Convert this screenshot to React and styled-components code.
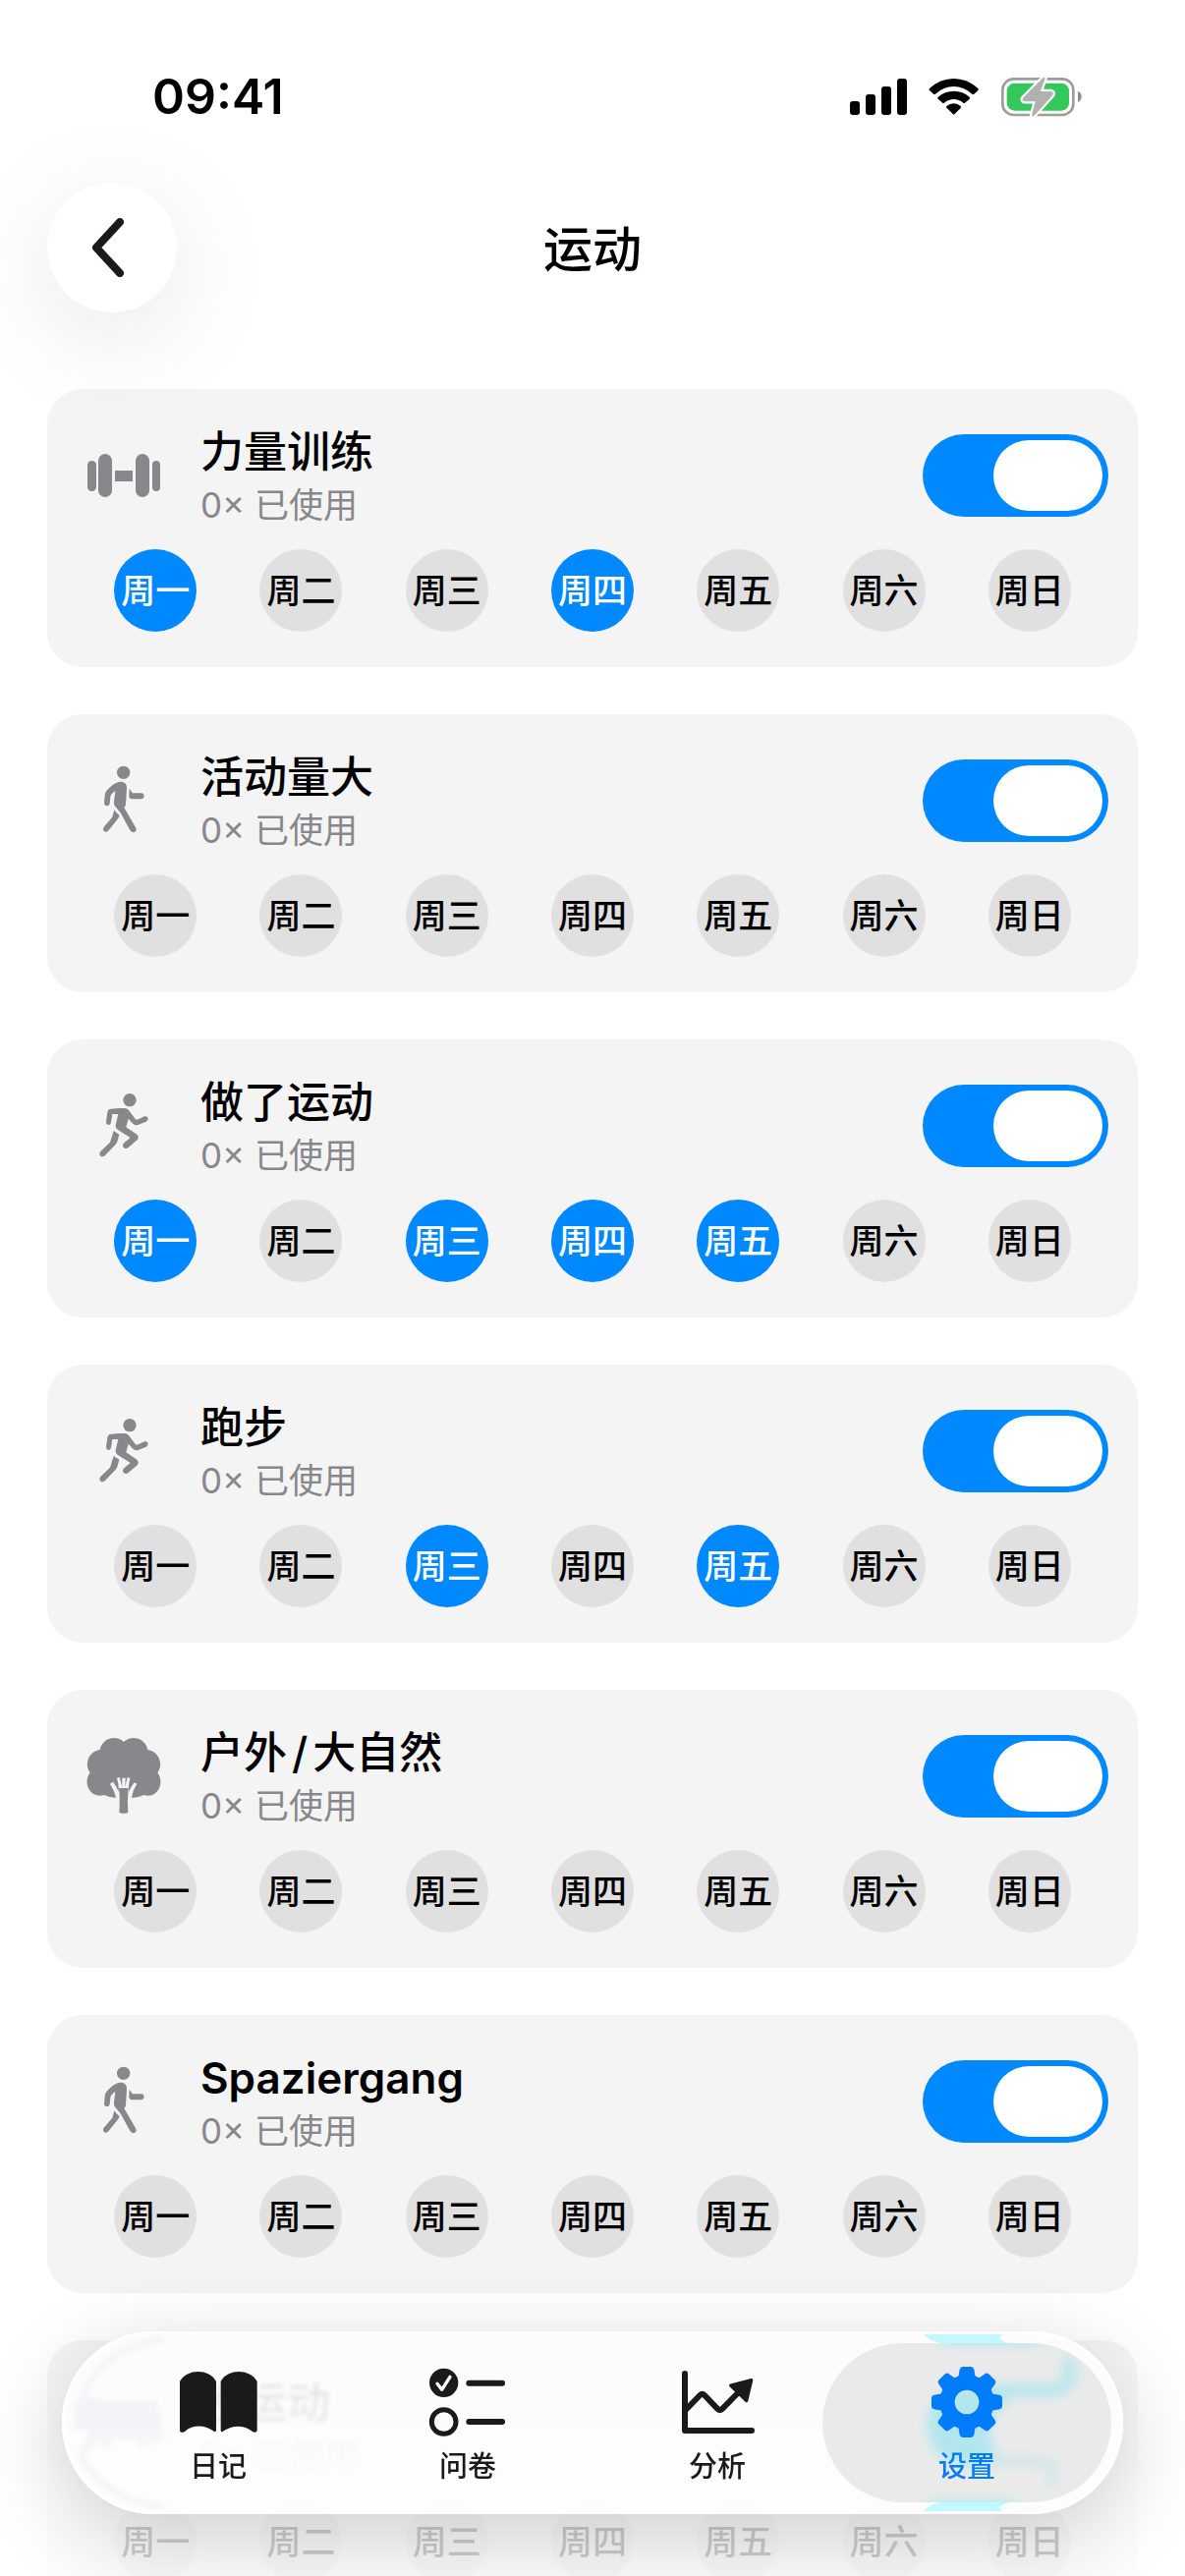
import styled, { createGlobalStyle, css } from 'styled-components';
import { useState } from 'react';

const GlobalStyle = createGlobalStyle`
  * {
    box-sizing: border-box;
  }

  body {
    margin: 0;
    background-color: #ffffff;
    color: #000000;
    font-family: Inter, 'Noto Sans CJK SC', sans-serif;
  }

  button,
  input {
    margin: 0;
    padding: 0;
    border: none;
    font-family: inherit;
    cursor: pointer;
  }
`;

const StyledScreen = styled.div`
  height: 100vh;
  overflow-y: auto;
  scrollbar-width: none;
`;

const StyledStatusBar = styled.div`
  display: flex;
  align-items: center;
  justify-content: space-between;
  height: 126px;
  padding: 70px 104px 0 155px;
`;

const StyledTime = styled.time`
  font-size: 50px;
  line-height: 56px;
  font-weight: 600;
`;

const StyledStatusIcons = styled.div`
  display: flex;
  align-items: center;
  gap: 22px;
`;

const StyledHeader = styled.header`
  position: relative;
  z-index: 1;
  display: grid;
  grid-template-columns: 132px 1fr 132px;
  align-items: center;
  padding: 60px 48px 78px;
`;

const StyledBackButton = styled.button`
  display: flex;
  align-items: center;
  justify-content: center;
  height: 132px;
  border-radius: 50%;
  background-color: #ffffff;
  box-shadow: 0 24px 110px rgba(0, 0, 0, 0.1);
`;

const StyledTitle = styled.h1`
  margin: 0;
  padding-top: 4px;
  text-align: center;
  font-size: 50px;
  line-height: 60px;
  font-weight: 500;
`;

const StyledList = styled.main`
  display: flex;
  flex-direction: column;
  gap: 48px;
  padding: 0 48px 300px;
`;

const StyledCard = styled.section`
  display: flex;
  flex-direction: column;
  gap: 23px;
  padding: 36px;
  border-radius: 36px;
  background-color: #f4f4f4;
`;

const StyledCardHeader = styled.div`
  display: flex;
  align-items: center;
  gap: 36px;
  height: 104px;
  margin-right: -6px;
`;

const StyledCardText = styled.div`
  flex: 1;
  padding-top: 6px;
`;

const StyledCardTitle = styled.h2`
  margin: 0;
  font-size: 44px;
  line-height: 54px;
  font-weight: 500;

  &:lang(de) {
    font-weight: 600;
  }
`;

const StyledSlash = styled.span`
  margin: 0 5px;
`;

const StyledCardUsage = styled.p`
  margin: 0;
  color: #88888c;
  font-size: 35px;
  line-height: 54px;
  font-weight: 400;
`;

const StyledSwitch = styled.input`
  appearance: none;
  width: 189px;
  height: 84px;
  padding: 6px;
  border-radius: 42px;
  background-color: #d8d8d8;
  transition: background-color 0.3s;

  &::before {
    content: '';
    display: block;
    width: 111px;
    height: 72px;
    border-radius: 36px;
    background-color: #ffffff;
    transition: margin 0.3s;
  }

  &:checked {
    background-color: #0088ff;
  }

  &:checked::before {
    margin-left: 66px;
  }
`;

const StyledDays = styled.div`
  display: flex;
`;

const StyledDayCell = styled.div`
  flex: 1;
  display: flex;
  justify-content: center;
`;

const StyledDay = styled.button`
  width: 84px;
  height: 84px;
  border-radius: 50%;
  background-color: #e0e0e0;
  color: #000000;
  font-size: 35px;
  line-height: 84px;
  font-weight: 500;
  white-space: nowrap;

  ${({ $active }) =>
    $active &&
    css`
      background-color: #0088ff;
      color: #ffffff;
    `}
`;

const StyledBottomFade = styled.div`
  position: fixed;
  left: 0;
  right: 0;
  bottom: 0;
  height: 250px;
  background: linear-gradient(rgba(255, 255, 255, 0), rgba(255, 255, 255, 0.8) 60%);
  pointer-events: none;
`;

const StyledTabBar = styled.nav`
  position: fixed;
  left: 63px;
  right: 63px;
  bottom: 63px;
  display: flex;
  padding: 12px;
  border-radius: 93px;
  background-color: rgba(253, 253, 253, 0.86);
  backdrop-filter: blur(2px);
  box-shadow:
    0 24px 90px rgba(0, 0, 0, 0.19),
    inset 0 0 0 3px #ffffff;
`;

const StyledTab = styled.a`
  position: relative;
  flex: 1;
  display: flex;
  flex-direction: column;
  align-items: center;
  gap: 12px;
  padding: 24px 0 18px;
  border-radius: 81px;
  color: ${({ $active }) => ($active ? '#007cfa' : '#1a1a1a')};
  background-color: ${({ $active }) => ($active ? '#eaeaea' : 'transparent')};
  font-size: 29px;
  line-height: 36px;
  font-weight: 500;
  text-decoration: none;

  & + & {
    margin-left: -40px;
  }

  svg,
  span {
    position: relative;
  }
`;

const StyledGlow = styled.svg`
  && {
    position: absolute;
    top: -12px;
    right: -12px;
  }
`;

const StyledEdge = styled.svg`
  position: absolute;
  top: 0;
  left: 0;
`;

const iconProps = { width: 84, height: 84, fill: '#88888c', 'aria-hidden': true };

function DumbbellIcon() {
  return (
    <svg viewBox="0 0 84 84" {...iconProps}>
      <rect x="5" y="27" width="9" height="31" rx="4.5" />
      <rect x="16" y="20" width="14" height="44" rx="7" />
      <rect x="33" y="37" width="18" height="11" />
      <rect x="54" y="20" width="14" height="44" rx="7" />
      <rect x="71" y="27" width="8" height="31" rx="4" />
    </svg>
  );
}

function WalkIcon() {
  return (
    <svg viewBox="72 99 252 252" {...iconProps}>
      <circle cx="197" cy="139" r="20" />
      <path d="M182 168 C198 165 208 173 207 188 L204 236 Q203 242 199 246 L235 308 Q239 317 230 321 Q222 323 217 315 L188 262 L172 243 Q167 237 168 228 L172 195 Q158 205 157 213 L155 234 Q153 241 146 241 Q138 240 138 232 L140 209 Q141 200 147 193 Q167 171 182 168 Z" />
      <path d="M215 189 L225 202 H253 Q260 203 260 211 Q260 219 253 220 H222 Q214 219 214 211 Z" />
      <path d="M169 253 Q175 263 185 270 Q181 281 176 285 L150 317 Q143 323 137 318 Q132 312 137 305 L163 275 Z" />
    </svg>
  );
}

function RunIcon() {
  return (
    <svg viewBox="72 102 252 252" {...iconProps}>
      <circle cx="216" cy="149" r="20" />
      <path d="M159 176 Q181 173 199 174 Q211 175 217 185 L233 207 Q237 210 242 208 L261 199 Q269 197 272 204 Q273 211 266 215 L241 225 Q233 227 226 221 L212 206 L205 232 L236 253 Q247 262 239 271 L211 295 Q203 300 197 294 Q192 287 199 280 L218 264 L181 241 Q172 235 173 225 L181 192 L163 192 L159 218 Q157 226 150 225 Q144 223 144 216 L148 187 Q149 177 159 176 Z" />
      <path d="M167 243 L184 254 L178 276 Q176 282 172 286 L141 318 Q134 325 127 320 Q121 313 127 306 L156 278 Z" />
    </svg>
  );
}

function TreeIcon() {
  return (
    <svg viewBox="72 78 252 252" {...iconProps}>
      <path d="M198 99 C221 76 264 87 271 123 C304 128 321 166 301 193 C325 226 299 274 259 261 Q245 268 222 270 Q225 247 238 227 L230 223 Q219 238 213 251 Q211 233 217 210 L209 207 L202 237 L203 209 H193 L193 237 L185 207 L177 210 Q184 231 182 251 Q175 233 165 221 L156 227 Q169 246 174 270 Q153 268 138 261 C96 273 71 226 95 193 C75 166 92 128 125 123 C132 87 175 76 198 99 Z" />
      <path d="M183 240 H212 Q208 280 211 314 Q198 321 184 314 Q187 270 183 240 Z" />
    </svg>
  );
}

function BookIcon() {
  return (
    <svg viewBox="30 27 252 216" width="84" height="72" fill="currentColor" aria-hidden="true">
      <path d="M39 72 C60 32 130 32 150 72 V221 Q148 229 141 223 C115 204 78 204 55 224 Q41 232 39 222 Z" />
      <path d="M164 72 C184 32 254 32 275 72 V222 Q273 231 261 225 C236 204 199 204 173 223 Q166 229 164 221 Z" />
    </svg>
  );
}

function ChecklistIcon() {
  return (
    <svg
      viewBox="792 27 252 216"
      width="84"
      height="72"
      fill="none"
      stroke="currentColor"
      strokeLinecap="round"
      strokeLinejoin="round"
      aria-hidden="true"
    >
      <circle cx="845" cy="76" r="44" fill="currentColor" stroke="none" />
      <path d="M825 79 L839 97 L864 58" stroke="#ffffff" strokeWidth="10" />
      <circle cx="845" cy="195" r="37" strokeWidth="15" />
      <path d="M922 77 H1023 M922 195 H1023" strokeWidth="18" />
    </svg>
  );
}

function ChartIcon() {
  return (
    <svg
      viewBox="24 27 252 216"
      width="84"
      height="72"
      fill="none"
      stroke="currentColor"
      strokeWidth="18"
      strokeLinecap="round"
      strokeLinejoin="round"
      aria-hidden="true"
    >
      <path d="M51 48 V222 H255" />
      <path d="M55 157 L97 114 Q104 107 111 114 L150 155 Q158 163 166 155 L218 102" strokeLinecap="butt" />
      <path d="M191 84 L254 68 L239 131 Z" fill="currentColor" strokeWidth="10" />
    </svg>
  );
}

function GearIcon() {
  return (
    <svg viewBox="786 27 252 216" width="84" height="72" fill="#007cfa" aria-hidden="true">
      <circle cx="912" cy="135" r="60" fill="none" stroke="#007cfa" strokeWidth="46" />
      {[0, 45, 90, 135, 180, 225, 270, 315].map((angle) => (
        <path
          key={angle}
          transform={`rotate(${angle} 912 135)`}
          d="M878 65 Q886 62 887 53 L890 35 Q892 27 899 27 H925 Q932 27 934 35 L937 53 Q938 62 946 65 L930 88 H894 Z"
        />
      ))}
    </svg>
  );
}

function StatusIcons() {
  return (
    <StyledStatusIcons>
      <svg viewBox="15 24 174 114" width="58" height="38" role="img" aria-label="信号">
        <rect x="15" y="96" width="30" height="42" rx="9" />
        <rect x="63" y="75" width="30" height="63" rx="9" />
        <rect x="111" y="51" width="30" height="87" rx="9" />
        <rect x="159" y="27" width="30" height="111" rx="9" />
      </svg>
      <svg viewBox="255 24 153 114" width="51" height="38" role="img" aria-label="Wi-Fi">
        <path d="M257 58 Q290 27 332 27 Q374 27 407 58 Q408 61 406 63 L394 74 Q391 76 388 74 Q363 51 332 51 Q301 51 276 74 Q273 76 270 74 L258 63 Q256 61 257 58 Z" />
        <path d="M283 84 Q305 65 332 65 Q359 65 381 84 Q382 87 380 89 L366 101 Q363 103 361 101 Q348 90 332 90 Q316 90 303 101 Q300 103 298 101 L284 89 Q282 87 283 84 Z" />
        <path d="M309 112 Q320 103 332 103 Q344 103 354 112 Q355 115 353 117 L334 136 Q332 138 330 136 L311 117 Q308 115 309 112 Z" />
      </svg>
      <svg viewBox="471 18 252 126" width="84" height="42" role="img" aria-label="电池充电中">
        <rect x="478" y="28" width="216" height="110" rx="34" fill="none" stroke="#9d9d9d" strokeWidth="8" />
        <path d="M708 65 Q719 70 719 82 Q719 94 708 99 Z" fill="#8c8c8c" />
        <rect x="491" y="41" width="190" height="84" rx="24" fill="#34c85a" />
        <path
          d="M602 24 L540 86 Q536 95 545 97 H578 L567 139 Q569 144 576 139 L630 79 Q637 69 627 66 H594 L608 26 Q606 20 602 24 Z"
          fill="#b1b1b1"
          stroke="#ffffff"
          strokeWidth="13"
          strokeLinejoin="round"
          paintOrder="stroke"
        />
      </svg>
    </StyledStatusIcons>
  );
}

// soft light of the switch that shines through the glass
function TabGlow() {
  return (
    <StyledGlow width="320" height="186" viewBox="0 0 320 186" aria-hidden="true">
      <defs>
        <filter id="soften" x="-20%" y="-20%" width="140%" height="140%">
          <feGaussianBlur stdDeviation="6" />
        </filter>
        <clipPath id="pill">
          <rect x="14" y="12" width="294" height="162" rx="81" />
        </clipPath>
      </defs>
      <path d="M117 3 H200 Q186 6 206 13 H138 Q122 10 117 3 Z" fill="#c4f8ff" />
      <path d="M117 183 H200 Q186 180 206 173 H138 Q122 176 117 183 Z" fill="#c4f8ff" />
      <g clipPath="url(#pill)">
        <g filter="url(#soften)" fill="none" stroke="#b2e6ed" strokeLinecap="round">
          <path d="M205 56 Q122 48 120 94 Q122 140 180 138 L192 126 Q172 95 205 68 Z" fill="#b2e6ed" stroke="none" />
          <path d="M190 60 H250 Q272 54 264 32" strokeWidth="12" />
          <path d="M180 132 H240 Q256 142 246 156" strokeWidth="9" stroke="#cfe6e9" />
          <path d="M140 8 H235 M126 178 H205" strokeWidth="10" />
        </g>
      </g>
    </StyledGlow>
  );
}

function BarEdge() {
  return (
    <StyledEdge width="120" height="186" viewBox="0 0 120 186" aria-hidden="true">
      <defs>
        <filter id="edge">
          <feGaussianBlur stdDeviation="2" />
        </filter>
      </defs>
      <g filter="url(#edge)" fill="none" stroke="#f5f6f8">
        <path d="M13 70 Q25 62 40 70 H98 V100 H13 Z" fill="#f3f4f7" stroke="none" />
        <path d="M20 134 Q22 108 46 106 H104" strokeWidth="9" />
        <path d="M20 72 Q36 18 104 8" strokeWidth="8" />
        <path d="M22 130 Q48 174 104 179" strokeWidth="7" />
      </g>
    </StyledEdge>
  );
}

const weekdays = ['周一', '周二', '周三', '周四', '周五', '周六', '周日'];

const activities = [
  { name: '力量训练', Icon: DumbbellIcon, days: [0, 3] },
  { name: '活动量大', Icon: WalkIcon, days: [] },
  { name: '做了运动', Icon: RunIcon, days: [0, 2, 3, 4] },
  { name: '跑步', Icon: RunIcon, days: [2, 4] },
  { name: '户外/大自然', Icon: TreeIcon, days: [] },
  { name: 'Spaziergang', lang: 'de', Icon: WalkIcon, days: [] },
  { name: '没运动', Icon: DumbbellIcon, days: [] },
];

const tabs = [
  { label: '日记', Icon: BookIcon },
  { label: '问卷', Icon: ChecklistIcon },
  { label: '分析', Icon: ChartIcon },
  { label: '设置', Icon: GearIcon },
];

/* eslint react/prop-types: 0 */
function ActivityCard({ name, lang, Icon, days }) {
  const [enabled, setEnabled] = useState(true);
  const [selected, setSelected] = useState(days);
  const [first, second] = name.split('/');

  const toggleDay = (day) => {
    setSelected((curr) =>
      curr.includes(day) ? curr.filter((d) => d !== day) : [...curr, day]
    );
  };

  return (
    <StyledCard>
      <StyledCardHeader>
        <Icon />
        <StyledCardText>
          <StyledCardTitle lang={lang}>
            {first}
            {second && <StyledSlash>/</StyledSlash>}
            {second}
          </StyledCardTitle>
          <StyledCardUsage>0× 已使用</StyledCardUsage>
        </StyledCardText>
        <StyledSwitch
          type="checkbox"
          role="switch"
          aria-label={name}
          checked={enabled}
          onChange={(e) => setEnabled(e.target.checked)}
        />
      </StyledCardHeader>
      <StyledDays>
        {weekdays.map((label, day) => (
          <StyledDayCell key={label}>
            <StyledDay
              type="button"
              $active={selected.includes(day)}
              aria-pressed={selected.includes(day)}
              onClick={() => toggleDay(day)}
            >
              {label}
            </StyledDay>
          </StyledDayCell>
        ))}
      </StyledDays>
    </StyledCard>
  );
}

function App() {
  const [currTab, setCurrTab] = useState('设置');

  return (
    <StyledScreen lang="zh-CN">
      <GlobalStyle />
      <StyledStatusBar>
        <StyledTime>09:41</StyledTime>
        <StatusIcons />
      </StyledStatusBar>
      <StyledHeader>
        <StyledBackButton type="button" aria-label="返回">
          <svg width="42" height="60" viewBox="0 0 42 60" fill="none" aria-hidden="true">
            <path
              d="M29 4 L5 30 L29 56"
              stroke="#1a1a1a"
              strokeWidth="8"
              strokeLinecap="round"
              strokeLinejoin="round"
            />
          </svg>
        </StyledBackButton>
        <StyledTitle>运动</StyledTitle>
      </StyledHeader>
      <StyledList>
        {activities.map((item) => (
          <ActivityCard key={item.name} {...item} />
        ))}
      </StyledList>
      <StyledBottomFade />
      <StyledTabBar>
        <BarEdge />
        {tabs.map(({ label, Icon }) => (
          <StyledTab
            key={label}
            href="#"
            $active={label === currTab}
            aria-current={label === currTab ? 'page' : undefined}
            onClick={() => setCurrTab(label)}
          >
            {label === '设置' && <TabGlow />}
            <Icon />
            <span>{label}</span>
          </StyledTab>
        ))}
      </StyledTabBar>
    </StyledScreen>
  );
}

export default App;
